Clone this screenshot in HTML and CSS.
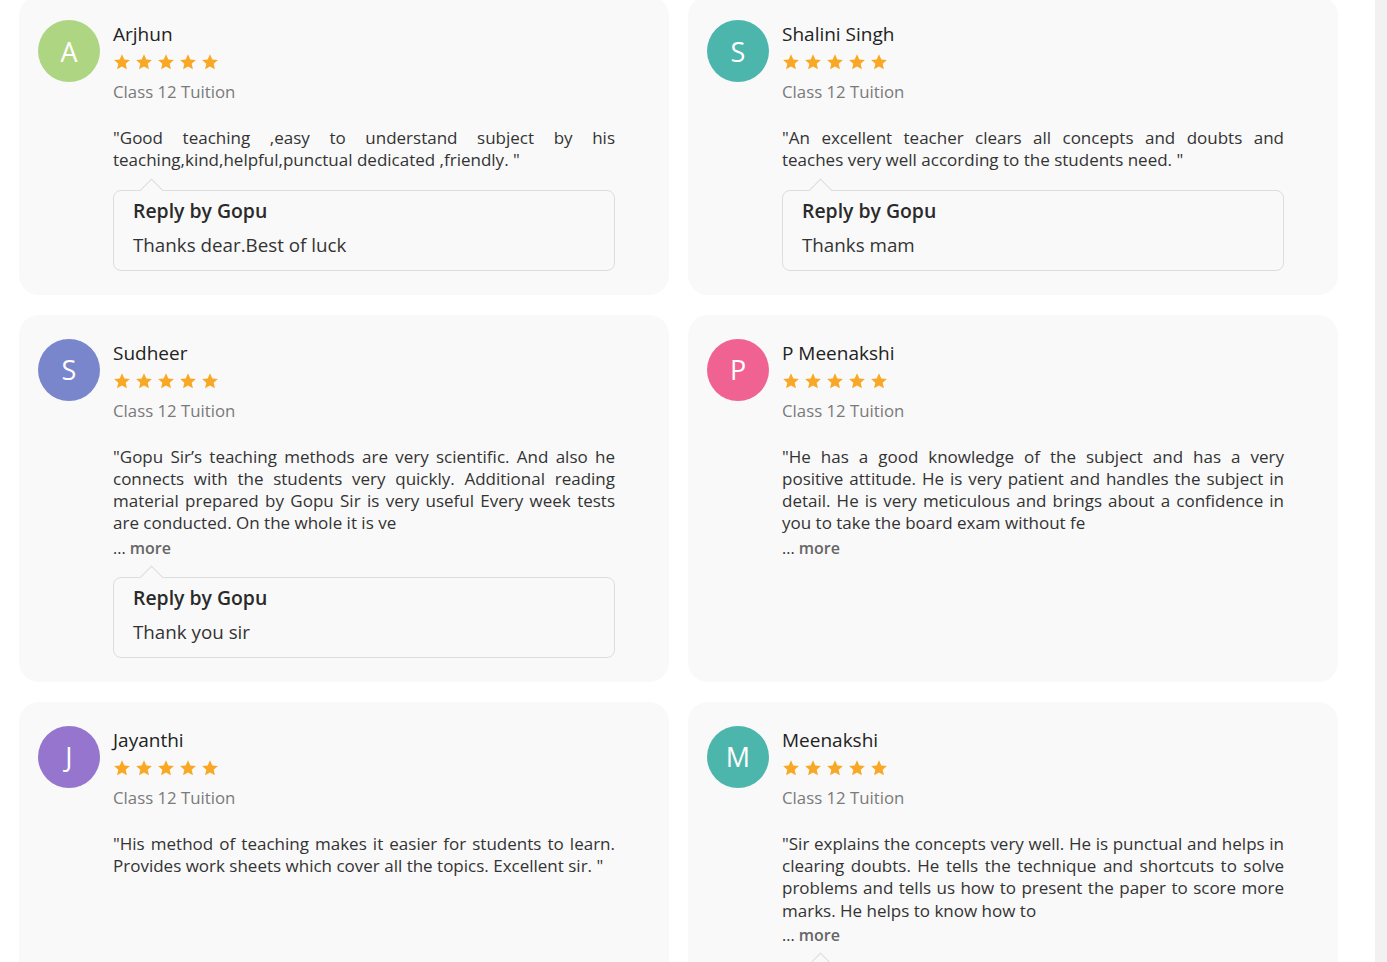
FILE: index.html
```html
<!DOCTYPE html>
<html>
<head>
<meta charset="utf-8">
<link rel="stylesheet" href="styles.css">
</head>
<body>
<svg width="0" height="0" class="defs">
  <defs>
    <symbol id="star" viewBox="0 0 24 24">
      <path d="M12 1.8l3.1 6.9 7.4.7-5.6 5 1.7 7.4L12 17.9l-6.6 3.9 1.7-7.4-5.6-5 7.4-.7z"/>
    </symbol>
  </defs>
</svg>
<div class="page">
  <main class="grid">
    <article class="card">
      <div class="avatar green">A</div>
      <div class="body">
        <div class="name">Arjhun</div>
        <div class="stars"><svg><use href="#star"/></svg><svg><use href="#star"/></svg><svg><use href="#star"/></svg><svg><use href="#star"/></svg><svg><use href="#star"/></svg></div>
        <div class="course">Class 12 Tuition</div>
        <p class="review">"Good teaching ,easy to understand subject by his teaching,kind,helpful,punctual dedicated ,friendly. "</p>
        <div class="reply">
          <div class="reply-title">Reply by Gopu</div>
          <div class="reply-text">Thanks dear.Best of luck</div>
        </div>
      </div>
    </article>
    <article class="card">
      <div class="avatar teal">S</div>
      <div class="body">
        <div class="name">Shalini Singh</div>
        <div class="stars"><svg><use href="#star"/></svg><svg><use href="#star"/></svg><svg><use href="#star"/></svg><svg><use href="#star"/></svg><svg><use href="#star"/></svg></div>
        <div class="course">Class 12 Tuition</div>
        <p class="review">"An excellent teacher clears all concepts and doubts and teaches very well according to the students need. "</p>
        <div class="reply">
          <div class="reply-title">Reply by Gopu</div>
          <div class="reply-text">Thanks mam</div>
        </div>
      </div>
    </article>
    <article class="card">
      <div class="avatar indigo">S</div>
      <div class="body">
        <div class="name">Sudheer</div>
        <div class="stars"><svg><use href="#star"/></svg><svg><use href="#star"/></svg><svg><use href="#star"/></svg><svg><use href="#star"/></svg><svg><use href="#star"/></svg></div>
        <div class="course">Class 12 Tuition</div>
        <p class="review">"Gopu Sir’s teaching methods are very scientific. And also he connects with the students very quickly. Additional reading material prepared by Gopu Sir is very useful Every week tests are conducted. On the whole it is ve</p>
        <div class="more">... <span>more</span></div>
        <div class="reply">
          <div class="reply-title">Reply by Gopu</div>
          <div class="reply-text">Thank you sir</div>
        </div>
      </div>
    </article>
    <article class="card">
      <div class="avatar pink">P</div>
      <div class="body">
        <div class="name">P Meenakshi</div>
        <div class="stars"><svg><use href="#star"/></svg><svg><use href="#star"/></svg><svg><use href="#star"/></svg><svg><use href="#star"/></svg><svg><use href="#star"/></svg></div>
        <div class="course">Class 12 Tuition</div>
        <p class="review">"He has a good knowledge of the subject and has a very positive attitude. He is very patient and handles the subject in detail. He is very meticulous and brings about a confidence in you to take the board exam without fe</p>
        <div class="more">... <span>more</span></div>
      </div>
    </article>
    <article class="card">
      <div class="avatar purple">J</div>
      <div class="body">
        <div class="name">Jayanthi</div>
        <div class="stars"><svg><use href="#star"/></svg><svg><use href="#star"/></svg><svg><use href="#star"/></svg><svg><use href="#star"/></svg><svg><use href="#star"/></svg></div>
        <div class="course">Class 12 Tuition</div>
        <p class="review">"His method of teaching makes it easier for students to learn. Provides work sheets which cover all the topics. Excellent sir. "</p>
      </div>
    </article>
    <article class="card">
      <div class="avatar teal">M</div>
      <div class="body">
        <div class="name">Meenakshi</div>
        <div class="stars"><svg><use href="#star"/></svg><svg><use href="#star"/></svg><svg><use href="#star"/></svg><svg><use href="#star"/></svg><svg><use href="#star"/></svg></div>
        <div class="course">Class 12 Tuition</div>
        <p class="review">"Sir explains the concepts very well. He is punctual and helps in clearing doubts. He tells the technique and shortcuts to solve problems and tells us how to present the paper to score more marks. He helps to know how to</p>
        <div class="more">... <span>more</span></div>
        <div class="reply">
          <div class="reply-title">Reply by Gopu</div>
          <div class="reply-text">Thank you</div>
        </div>
      </div>
    </article>
  </main>
  <div class="scrolltrack"></div>
</div>
</body>
</html>
```

FILE: styles.css
```css
html, body {
  margin: 0;
  padding: 0;
  background: #ffffff;
  height: 100%;
  overflow: hidden;
}
body {
  font-family: "Open Sans", Lato, "Liberation Sans", sans-serif;
  color: #333333;
}
.defs {
  position: absolute;
  width: 0;
  height: 0;
}
.page {
  display: flex;
  height: 962px;
  overflow: hidden;
}
.grid {
  width: 1375px;
  flex: none;
  display: grid;
  grid-template-columns: 650px 650px;
  column-gap: 19px;
  row-gap: 20px;
  padding-left: 19px;
  margin-top: -4px;
  box-sizing: border-box;
  align-content: start;
}
.scrolltrack {
  width: 12px;
  flex: none;
  background: #f1f1f1;
}
.card {
  background: #f9f9f9;
  border-radius: 20px;
  padding: 24px 54px 24px 19px;
  display: grid;
  grid-template-columns: 62px 1fr;
  column-gap: 13px;
  align-items: start;
}
.avatar {
  width: 62px;
  height: 62px;
  border-radius: 50%;
  color: #ffffff;
  font-size: 27px;
  display: flex;
  align-items: center;
  justify-content: center;
  line-height: 1;
}
.green { background: #aed581; }
.teal { background: #4db6ac; }
.indigo { background: #7986cb; }
.pink { background: #f06292; }
.purple { background: #9575cd; }
.body {
  min-width: 0;
}
.name {
  font-size: 19px;
  line-height: 28px;
  font-weight: 500;
  color: #222222;
}
.stars {
  margin-top: 4px;
  height: 20px;
  display: flex;
  align-items: center;
  gap: 4px;
  fill: #f9a825;
}
.stars svg {
  width: 18px;
  height: 18px;
  display: block;
}
.course {
  margin-top: 8px;
  font-size: 16.8px;
  line-height: 24px;
  color: #7a7a7a;
}
.review {
  margin: 23px 0 0;
  font-size: 17px;
  line-height: 22.3px;
  text-align: justify;
  color: #333333;
}
.more {
  margin-top: 2px;
  font-size: 16px;
  line-height: 22px;
  color: #333333;
}
.more span {
  color: #666666;
  font-weight: 600;
}
.reply {
  position: relative;
  margin-top: 18px;
  border: 1px solid #dddddd;
  border-radius: 8px;
  background: #f9f9f9;
  padding: 6px 19px 11px;
}
.more + .reply {
  margin-top: 18px;
}
.reply::before {
  content: "";
  position: absolute;
  top: -9px;
  left: 29px;
  width: 16px;
  height: 16px;
  background: #f9f9f9;
  border-top: 1px solid #dddddd;
  border-left: 1px solid #dddddd;
  transform: rotate(45deg);
}
.reply-title {
  position: relative;
  font-size: 19.4px;
  line-height: 28px;
  font-weight: 600;
  color: #2a2a2a;
}
.reply-text {
  position: relative;
  margin-top: 6px;
  font-size: 18.8px;
  line-height: 28px;
  color: #333333;
}
```
